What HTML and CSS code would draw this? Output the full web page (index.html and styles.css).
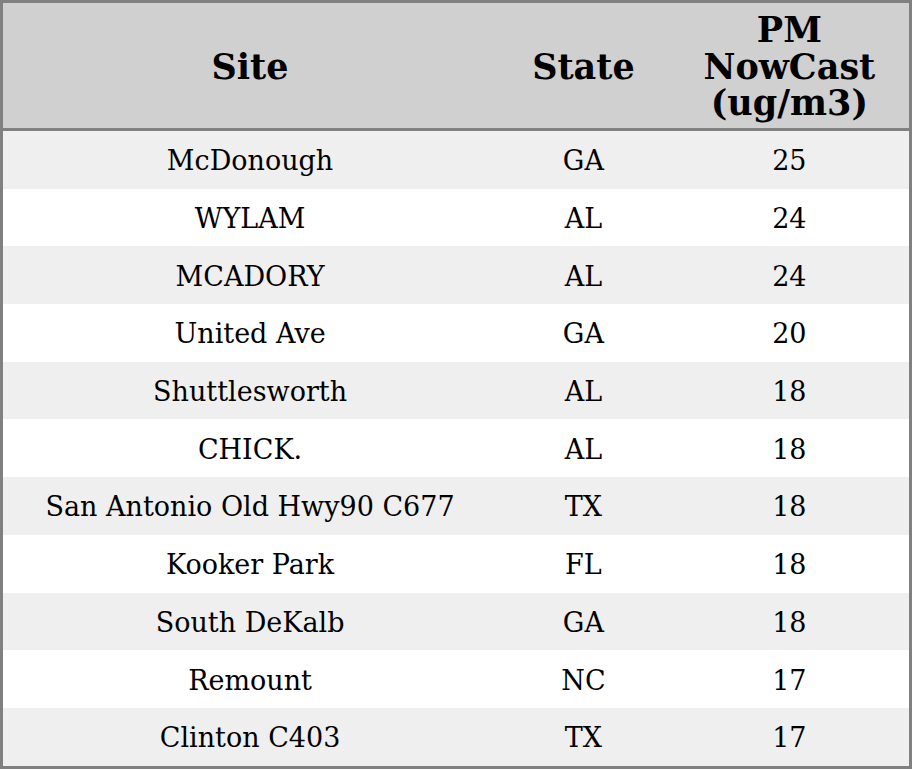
FILE: index.html
```html
<!DOCTYPE html>
<html>
<head>
<meta charset="utf-8">
<link rel="stylesheet" href="styles.css">
</head>
<body>
<table class="aq-table">
  <colgroup>
    <col class="col-site">
    <col class="col-state">
    <col class="col-pm">
  </colgroup>
  <thead>
    <tr><th>Site</th><th>State</th><th>PM<br>NowCast<br>(ug/m3)</th></tr>
  </thead>
  <tbody>
    <tr><td>McDonough</td><td>GA</td><td>25</td></tr>
    <tr><td>WYLAM</td><td>AL</td><td>24</td></tr>
    <tr><td>MCADORY</td><td>AL</td><td>24</td></tr>
    <tr><td>United Ave</td><td>GA</td><td>20</td></tr>
    <tr><td>Shuttlesworth</td><td>AL</td><td>18</td></tr>
    <tr><td>CHICK.</td><td>AL</td><td>18</td></tr>
    <tr><td>San Antonio Old Hwy90 C677</td><td>TX</td><td>18</td></tr>
    <tr><td>Kooker Park</td><td>FL</td><td>18</td></tr>
    <tr><td>South DeKalb</td><td>GA</td><td>18</td></tr>
    <tr><td>Remount</td><td>NC</td><td>17</td></tr>
    <tr><td>Clinton C403</td><td>TX</td><td>17</td></tr>
  </tbody>
</table>
</body>
</html>
```
FILE: styles.css
```css
html, body {
  margin: 0;
  padding: 0;
  background: #ffffff;
}
.aq-table {
  width: 912px;
  border-collapse: collapse;
  border: 3px solid #808080;
  font-family: "DejaVu Serif", serif;
  color: #000;
  table-layout: fixed;
}
.col-site { width: 494px; }
.col-state { width: 172px; }
.col-pm { width: 240px; }
.aq-table th {
  background: #d0d0d0;
  font-size: 35px;
  font-weight: bold;
  line-height: 36.7px;
  height: 122px;
  padding: 3px 0 0 0;
  text-align: center;
  vertical-align: middle;
  border-bottom: 3px solid #808080;
}
.aq-table td {
  font-size: 27px;
  text-align: center;
  vertical-align: middle;
  padding: 2px 0 0 0;
  height: 55.7px;
}
.aq-table tbody tr:nth-child(odd) td {
  background: #efefef;
}
```
